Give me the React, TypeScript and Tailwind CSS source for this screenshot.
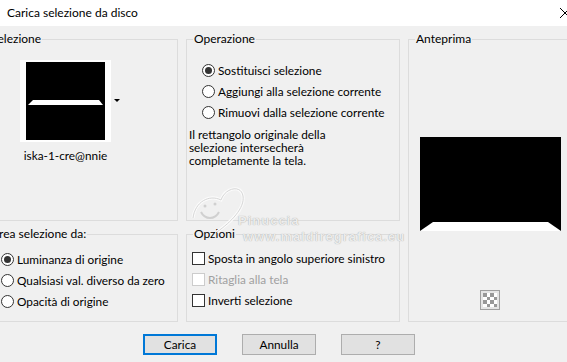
import type React from "react"

const font = { fontFamily: 'Lato, "Noto Sans", sans-serif' }

function Group({ label, className, children }: { label: string; className?: string; children?: React.ReactNode }) {
  return (
    <fieldset className={`min-w-0 shrink-0 border border-[#dcdcdc] ${className ?? ""}`}>
      <legend className="ml-[6px] whitespace-nowrap px-[1px] text-[12px] leading-[16px] text-black">{label}</legend>
      {children}
    </fieldset>
  )
}

function Radio({ label, checked }: { label: string; checked?: boolean }) {
  return (
    <div className="flex h-[21px] items-center gap-[3px] whitespace-nowrap">
      <span className="flex h-[13px] w-[13px] shrink-0 items-center justify-center rounded-full border border-[#333] bg-white">
        {checked && <span className="h-[7px] w-[7px] rounded-full bg-[#333]" />}
      </span>
      <span>{label}</span>
    </div>
  )
}

function Check({ label, disabled }: { label: string; disabled?: boolean }) {
  return (
    <div className={`flex h-[21px] items-center gap-[3px] whitespace-nowrap ${disabled ? "text-[#a0a0a0]" : ""}`}>
      <span className={`h-[13px] w-[13px] shrink-0 border bg-white ${disabled ? "border-[#cccccc]" : "border-[#333]"}`} />
      <span>{label}</span>
    </div>
  )
}

const mark = { fontFamily: '"Liberation Sans", sans-serif' }

export default function App() {
  return (
    <div className="h-[362px] w-[567px] overflow-hidden bg-[#f0f0f0] text-[11.8px] text-black" style={font}>
      {/* Title bar */}
      <div className="flex h-[26px] items-center justify-between bg-white pl-[7px]">
        <span className="text-[12px]">Carica selezione da disco</span>
        <svg width="10" height="10" viewBox="0 0 10 10" className="mr-[-3px]">
          <path d="M0 0L10 10M10 0L0 10" stroke="#000" strokeWidth="1" />
        </svg>
      </div>

      <div className="relative ml-[-17px] flex w-[610px] gap-[8px] pt-[5px]">
        {/* Left column */}
        <div className="flex w-[195px] shrink-0 flex-col gap-[5px]">
          <Group label="Selezione" className="h-[190px]">
            <div className="flex flex-col items-start pl-[36px] pt-[13px]">
              <div className="flex items-center gap-[3px]">
                <div className="h-[82px] w-[91px] bg-white pb-[2px] pl-[6px] pr-[6px] pt-[2px]">
                  <svg viewBox="0 0 79 78" className="h-[78px] w-[79px] bg-black">
                    <polygon points="7,38 73,38 77,43 2,43" fill="#fff" />
                  </svg>
                </div>
                <svg width="6" height="4" viewBox="0 0 6 4">
                  <polygon points="0,0 6,0 3,3" fill="#000" />
                </svg>
              </div>
              <div className="mt-[5px] w-[91px] text-center">iska-1-cre@nnie</div>
            </div>
          </Group>
          <Group label="Area selezione da:" className="h-[96px]">
            <div className="pl-[17px] pt-[7px]">
              <Radio label="Luminanza di origine" checked />
              <Radio label="Qualsiasi val. diverso da zero" />
              <Radio label="Opacità di origine" />
            </div>
          </Group>
        </div>

        {/* Middle column */}
        <div className="flex w-[214px] shrink-0 flex-col gap-[5px]">
          <Group label="Operazione" className="h-[190px]">
            <div className="pl-[15px] pt-[13px]">
              <Radio label="Sostituisci selezione" checked />
              <Radio label="Aggiungi alla selezione corrente" />
              <Radio label="Rimuovi dalla selezione corrente" />
            </div>
            <p className="mt-[5px] pl-[2px] leading-[13px]">
              Il rettangolo originale della
              <br />
              selezione intersecherà
              <br />
              completamente la tela.
            </p>
          </Group>
          <Group label="Opzioni" className="h-[96px]">
            <div className="pl-[5px] pt-[6px]">
              <Check label="Sposta in angolo superiore sinistro" />
              <Check label="Ritaglia alla tela" disabled />
              <Check label="Inverti selezione" />
            </div>
          </Group>
        </div>

        {/* Right column */}
        <Group label="Anteprima" className="h-[291px] w-[180px]">
          <div className="flex flex-col pl-[11px] pt-[90px]">
            <svg viewBox="0 0 141 94" className="h-[94px] w-[141px] bg-black">
              <polygon points="13,85 128,85 141,94 0,94" fill="#fff" />
            </svg>
            <div className="ml-[60px] mt-[59px] flex h-[20px] w-[20px] items-center justify-center border border-[#a0a0a0] bg-[#e6e6e6]">
              <svg width="14" height="14" viewBox="0 0 4 4" shapeRendering="crispEdges">
                <rect width="4" height="4" fill="#fff" />
                <rect x="0" y="0" width="1" height="1" fill="#999" />
                <rect x="2" y="0" width="1" height="1" fill="#999" />
                <rect x="1" y="1" width="1" height="1" fill="#999" />
                <rect x="3" y="1" width="1" height="1" fill="#999" />
                <rect x="0" y="2" width="1" height="1" fill="#999" />
                <rect x="2" y="2" width="1" height="1" fill="#999" />
                <rect x="1" y="3" width="1" height="1" fill="#999" />
                <rect x="3" y="3" width="1" height="1" fill="#999" />
              </svg>
            </div>
          </div>
        </Group>

        {/* Watermark */}
        <svg className="pointer-events-none absolute left-[208px] top-[152px]" width="56" height="56" viewBox="0 0 56 56" fill="none">
          <path d="M2 40 C4 24 18 16 30 22 C34 10 50 6 52 18 C54 30 40 44 26 54" stroke="#fbfbfb" strokeWidth="3" />
          <path d="M2 40 C4 24 18 16 30 22 C34 10 50 6 52 18 C54 30 40 44 26 54" stroke="#d6d6d6" strokeWidth="1" />
          <path d="M10 34 C14 42 24 42 28 34" stroke="#d0d0d0" strokeWidth="2" />
          <circle cx="14" cy="28" r="1.5" fill="#d0d0d0" />
          <circle cx="24" cy="26" r="1.5" fill="#d0d0d0" />
        </svg>
        <div
          className="pointer-events-none absolute left-[255px] top-[185px] text-[13px] font-bold tracking-[1px] text-[#ececec] [text-shadow:0_0_1px_#9a9a9a]"
          style={mark}
        >
          Pinuccia
        </div>
        <div
          className="pointer-events-none absolute left-[260px] top-[201px] text-[13px] font-bold tracking-[1px] text-[#ececec] [text-shadow:0_0_1px_#9a9a9a]"
          style={mark}
        >
          www.maldiregrafica.eu
        </div>
      </div>

      {/* Buttons */}
      <div className="mt-[12px] flex gap-[25px] pl-[143px]">
        <button className="h-[21px] w-[74px] border-2 border-[#0078d7] bg-[#e1e1e1]">Carica</button>
        <button className="h-[21px] w-[74px] border border-[#adadad] bg-[#e1e1e1]">Annulla</button>
        <button className="h-[21px] w-[74px] border border-[#adadad] bg-[#e1e1e1]">?</button>
      </div>
    </div>
  )
}
